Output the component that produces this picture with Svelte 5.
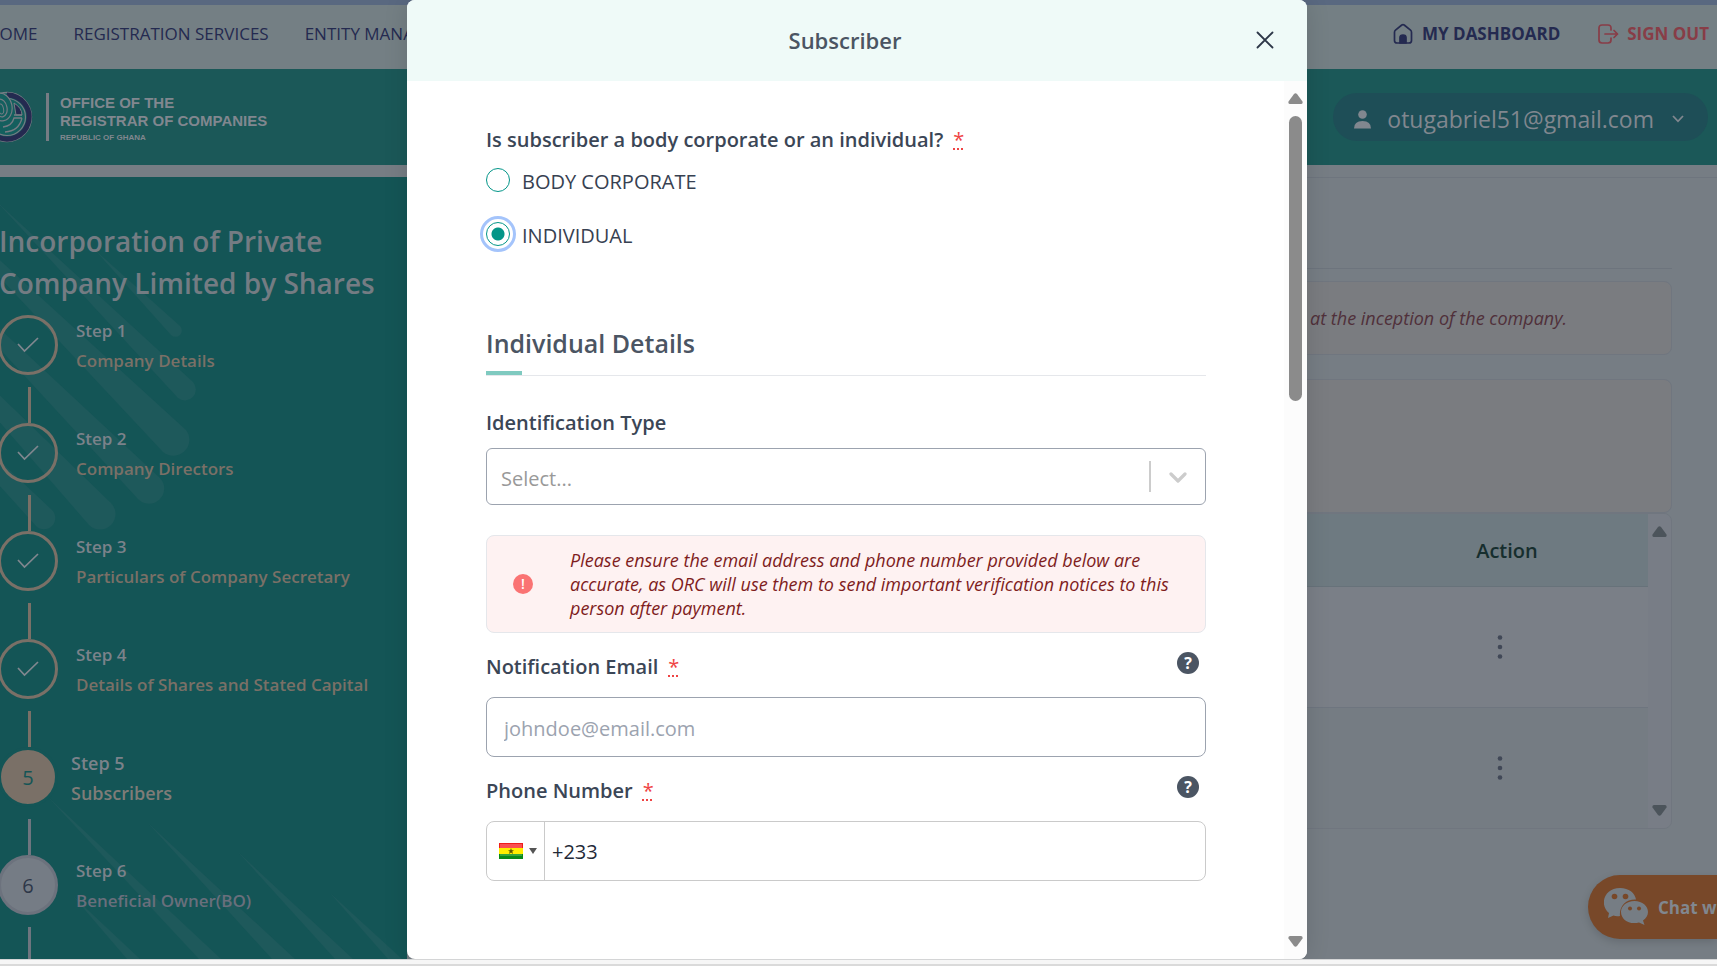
<script>
  const steps = [
    { n: 1, name: 'Company Details', state: 'done' },
    { n: 2, name: 'Company Directors', state: 'done' },
    { n: 3, name: 'Particulars of Company Secretary', state: 'done' },
    { n: 4, name: 'Details of Shares and Stated Capital', state: 'done' },
    { n: 5, name: 'Subscribers', state: 'current' },
    { n: 6, name: 'Beneficial Owner(BO)', state: 'todo' }
  ];
  let kind = $state('individual');
  let idType = $state('');
  let email = $state('');
  let phone = $state('+233');
</script>

<div class="shell">
  <div class="page">
    <nav class="topnav">
      <div class="links">
        <a href="#home">HOME</a>
        <a href="#services">REGISTRATION SERVICES</a>
        <a href="#entity">ENTITY MANAGEMENT</a>
      </div>
      <div class="links account">
        <a href="#dashboard">
          <svg width="20" height="22" viewBox="0 0 20 22" fill="none" stroke="currentColor" stroke-width="1.7" stroke-linejoin="round">
            <path d="M1.5 9.2 Q1.5 8 2.5 7.2 L8.8 2 Q10 1.2 11.2 2 L17.5 7.2 Q18.500 8 18.500 9.200 V17.500 Q18.500 20 16 20 H4 Q1.500 20 1.500 17.500 Z" />
            <path d="M7 20 V14.500 Q7 12 10 12 Q13 12 13 14.500 V20 Z" fill="currentColor" />
          </svg>
          MY DASHBOARD
        </a>
        <a href="#signout" class="signout">
          <svg width="21" height="20" viewBox="0 0 21 20" fill="none" stroke="currentColor" stroke-width="1.700" stroke-linecap="round" stroke-linejoin="round">
            <path d="M13 6 V4 Q13 1 10 1 H4 Q1 1 1 4 V16 Q1 19 4 19 H10 Q13 19 13 16 V14" />
            <path d="M7 10 H19.500 M16 6.500 L19.500 10 L16 13.500" />
          </svg>
          SIGN OUT
        </a>
      </div>
    </nav>

    <header class="brandbar">
      <div class="brand">
        <svg width="58" height="52" viewBox="0 0 58 52" fill="none" aria-hidden="true">
          <circle cx="31" cy="26" r="24.500" fill="#145f5e" stroke="#767c84" stroke-width="1.300" />
          <path d="M31 4 A22 22 0 1 1 20 45" stroke="#242a50" stroke-width="5" />
          <circle cx="31" cy="26" r="18.500" stroke="#767c84" stroke-width="1.200" />
          <path d="M38 12 Q46 17 46 24 H40 Z" fill="#242a50" stroke="#767c84" />
          <path d="M46 27 H38 Q36 35 27 36 M46 27 Q43 40 29 41 M38 24 H46" stroke="#767c84" stroke-width="1.300" />
          <ellipse cx="25" cy="16" rx="11" ry="14" fill="#145f5e" stroke="#767c84" stroke-width="1.200" transform="rotate(-12 25 16)" />
          <ellipse cx="25" cy="17" rx="6" ry="9" stroke="#767c84" stroke-width="1.200" transform="rotate(-12 25 17)" />
          <ellipse cx="25" cy="18" rx="2.500" ry="5" stroke="#767c84" stroke-width="1" transform="rotate(-12 25 18)" />
        </svg>
        <div class="brandtext">
          <strong>OFFICE OF THE<br />REGISTRAR OF COMPANIES</strong>
          <small>REPUBLIC OF GHANA</small>
        </div>
      </div>
      <button class="user">
        <svg width="17" height="19" viewBox="0 0 17 19" fill="currentColor"><circle cx="8.500" cy="4.500" r="4.300" /><path d="M0 18.500 Q0 11 8.500 11 Q17 11 17 18.500 Z" /></svg>
        <span>otugabriel51@gmail.com</span>
        <svg class="caret" width="12" height="8" viewBox="0 0 12 8" fill="none" stroke="currentColor" stroke-width="1.800"><path d="M1 1 L6 6.300 L11 1" /></svg>
      </button>
    </header>

    <div class="columns">
      <aside class="sidebar">
        <svg class="streaks" width="407" height="782" viewBox="0 177 407 782" fill="#1e595b" aria-hidden="true">
          <path d="M95 250 L180 326 A6 6 0 0 1 171 335 Z" />
          <path d="M-2 203 L193 382 A11 11 0 0 1 178 398 Z" />
          <path d="M-110 160 L186 430 A16 16 0 0 1 163 452 Z" />
          <path d="M-130 208 L160 478 A15 15 0 0 1 138 499 Z" />
          <path d="M-150 250 L111 503 A15 15 0 0 1 89 525 Z" />
          <path d="M-150 320 L52 510 A11 11 0 0 1 36 526 Z" />
          <path d="M48 797 L221 959 H199 Z" />
          <path d="M148 823 L295 959 H272 Z" />
          <path d="M238 852 L353 959 H335 Z" />
          <path d="M330 893 L402 959 H388 Z" />
          <path d="M73 896 L140 959 H127 Z" />
        </svg>
        <h1>Incorporation of Private Company Limited by Shares</h1>
        <ol>
          {#each steps as s}
            <li class={s.state}>
              <div class="rail">
                <span class="dot">
                  {#if s.state === 'done'}
                    <svg width="22" height="16" viewBox="0 0 22 16" fill="none" stroke="#81878f" stroke-width="1.700"><path d="M1 7 L7.500 14 L21 1" /></svg>
                  {:else}{s.n}{/if}
                </span>
                <span class="line"></span>
              </div>
              <div class="steptext"><span>Step {s.n}</span><em>{s.name}</em></div>
            </li>
          {/each}
        </ol>
      </aside>

      <main>
        <div class="pagehead"></div>
        <div class="note first">at the inception of the company.</div>
        <div class="note second"></div>
        <div class="tablebox">
          <table>
            <thead><tr><th></th><th class="action">Action</th></tr></thead>
            <tbody>
              {#each [1, 2] as row}
                <tr>
                  <td></td>
                  <td class="action">
                    <button class="more" aria-label="Row actions">
                      <svg width="6" height="24" viewBox="0 0 6 24" fill="#414857"><circle cx="3" cy="2.500" r="2.300" /><circle cx="3" cy="12" r="2.300" /><circle cx="3" cy="21.500" r="2.300" /></svg>
                    </button>
                  </td>
                </tr>
              {/each}
            </tbody>
          </table>
          <div class="bar">
            <svg width="15" height="11" viewBox="0 0 15 11" fill="#4c545b"><path d="M6 1 Q7.500 -0.500 9 1 L14.500 8.500 Q15 11 13 11 H2 Q0 11 0.500 8.500 Z" /></svg>
            <svg width="15" height="11" viewBox="0 0 15 11" fill="#4c545b"><path d="M6 10 Q7.500 11.500 9 10 L14.500 2.500 Q15 0 13 0 H2 Q0 0 0.500 2.500 Z" /></svg>
          </div>
        </div>
      </main>
    </div>

    <button class="chat">
      <svg width="45" height="38" viewBox="0 0 45 38" aria-hidden="true">
        <path fill="#767d84" d="M16 0 C25 0 31 5 32 11.500 C22 11 15 18 16 28 C13 28.500 11 28 9.500 27.500 L4 30 L5 25 C-5 17 0 0 16 0 Z" />
        <path fill="#767d84" d="M30.500 13 C38.500 13 44 18 44 24 C44 27.500 42 30.500 39 32.500 L40.500 37 L35 34.500 C25 37 17 31.500 17 24 C17 18 22.500 13 30.500 13 Z" />
        <g fill="#784829"><circle cx="10.500" cy="8.500" r="2.800" /><circle cx="21.500" cy="8.500" r="2.800" /><circle cx="26" cy="20.500" r="2" /><circle cx="35" cy="20.500" r="2" /></g>
      </svg>
      <span>Chat with us</span>
    </button>

    <div class="layer">
      <div class="modal" role="dialog" aria-modal="true" aria-labelledby="modal-title">
        <div class="modalhead">
          <h2 id="modal-title">Subscriber</h2>
          <button class="close" aria-label="Close">
            <svg width="18" height="18" viewBox="0 0 18 18" fill="none" stroke="#2d3748" stroke-width="1.800" stroke-linecap="round"><path d="M1.500 1.500 L16.500 16.500 M16.500 1.500 L1.500 16.500" /></svg>
          </button>
        </div>
        <div class="modalbody">
          <form>
            <fieldset>
              <legend>Is subscriber a body corporate or an individual?<abbr title="required">*</abbr></legend>
              <label class="choice"><input type="radio" name="kind" value="corporate" bind:group={kind} /><span>BODY CORPORATE</span></label>
              <label class="choice"><input type="radio" name="kind" value="individual" bind:group={kind} /><span>INDIVIDUAL</span></label>
            </fieldset>

            <h3>Individual Details</h3>

            <div class="labelrow idrow"><label for="idtype">Identification Type</label></div>
            <div class="selectbox">
              <select id="idtype" bind:value={idType}><option value="">Select...</option></select>
              <span class="sep"></span>
              <svg width="18" height="12" viewBox="0 0 18 12" fill="none" stroke="#cccccc" stroke-width="3.200" stroke-linecap="round" stroke-linejoin="round"><path d="M2 3 L9 10 L16 3" /></svg>
            </div>

            <div class="alert">
              <span class="bang">!</span>
              <p>Please ensure the email address and phone number provided below are accurate, as ORC will use them to send important verification notices to this person after payment.</p>
            </div>

            <div class="labelrow">
              <label for="email">Notification Email<abbr title="required">*</abbr></label>
              <button type="button" class="help" aria-label="Help with email">?</button>
            </div>
            <input class="text" id="email" type="email" placeholder="johndoe@email.com" bind:value={email} />

            <div class="labelrow">
              <label for="phone">Phone Number<abbr title="required">*</abbr></label>
              <button type="button" class="help" aria-label="Help with phone number">?</button>
            </div>
            <div class="phone">
              <button type="button" class="country" aria-label="Country">
                <svg width="24" height="16" viewBox="0 0 24 16">
                  <rect width="24" height="16" fill="#ee1c1c" /><rect y="1" x="1" width="22" height="4" fill="#fa5050" />
                  <rect y="5" width="24" height="6" fill="#ffee00" /><rect y="11" width="24" height="5" fill="#088a18" /><rect y="11" x="1" width="22" height="2" fill="#35a53c" />
                  <path d="M12 5 L12.800 7.200 H15 L13.300 8.600 L14 11 L12 9.600 L10 11 L10.700 8.600 L9 7.200 H11.200 Z" fill="#5c5600" />
                </svg>
                <svg width="8" height="6" viewBox="0 0 8 6" fill="#555"><path d="M0 0 H8 L4 6 Z" /></svg>
              </button>
              <input id="phone" type="tel" bind:value={phone} />
            </div>
          </form>
          <div class="scroll">
            <svg width="15" height="11" viewBox="0 0 15 11" fill="#8b8b8b"><path d="M6 1 Q7.500 -0.500 9 1 L14.500 8.500 Q15 11 13 11 H2 Q0 11 0.500 8.500 Z" /></svg>
            <span class="thumb"></span>
            <svg class="down" width="15" height="11" viewBox="0 0 15 11" fill="#8b8b8b"><path d="M6 10 Q7.500 11.500 9 10 L14.500 2.500 Q15 0 13 0 H2 Q0 0 0.500 2.500 Z" /></svg>
          </div>
        </div>
      </div>
    </div>
  </div>
  <div class="frame"></div>
</div>

<style>
  :global(body) { margin: 0; }
  .shell, .shell * { box-sizing: border-box; }
  .shell {
    height: 100vh;
    display: flex;
    flex-direction: column;
    overflow: hidden;
    font-family: "Open Sans", "Noto Sans", sans-serif;
    font-size: 20px;
  }
  button, input, select { font: inherit; color: inherit; }
  button { border: 0; background: none; padding: 0; cursor: pointer; }
  svg { flex: none; display: block; }
  h1, h2, h3, ol, p { margin: 0; padding: 0; }

  .page {
    position: relative;
    flex: 1;
    min-height: 0;
    display: flex;
    flex-direction: column;
    overflow: hidden;
    background: #767d84;
  }
  .frame {
    height: 7px;
    flex: none;
    background: #f6f6f6;
    border-top: 1px solid #d4d5d6;
    border-bottom: 2px solid #dadada;
  }

  .topnav {
    flex: none;
    height: 69px;
    border-top: 5px solid #596880;
    background: #747f84;
    display: flex;
    justify-content: space-between;
    padding-right: 8px;
  }
  .links {
    display: flex;
    align-items: center;
    gap: 36px;
    margin-left: -13px;
    font-size: 17px;
    font-weight: 500;
    white-space: nowrap;
    line-height: 24px;
    padding-bottom: 6px;
  }
  .links a { color: #242a50; text-decoration: none; display: flex; align-items: center; gap: 9px; }
  .links.account { font-weight: 700; gap: 38px; }
  .links a.signout { color: #883d47; gap: 8px; }

  .brandbar {
    flex: none;
    height: 96px;
    background: #1b5858;
    display: flex;
    align-items: center;
    justify-content: space-between;
    padding-right: 9px;
  }
  .brand { display: flex; align-items: center; margin-left: -24px; color: #81878f; font-family: "Liberation Sans", sans-serif; }
  .brandtext {
    margin-left: 12px;
    height: 48px;
    padding: 1px 0 0 11px;
    border-left: 3px solid #767c84;
    white-space: nowrap;
  }
  .brandtext strong { display: block; font-size: 15px; line-height: 18px; }
  .brandtext small { display: block; font-size: 8px; line-height: 12px; font-weight: 700; margin-top: 2px; }
  .user {
    height: 48px;
    border-radius: 24px;
    background: #1e4e57;
    color: #81878f;
    display: flex;
    align-items: center;
    padding: 4px 24px 0 21px;
    font-size: 23px;
    line-height: 32px;
  }
  .user span { margin: 0 18px 0 16px; }

  .columns { flex: 1; min-height: 0; display: flex; padding-top: 12px; }
  .sidebar { width: 407px; flex: none; position: relative; background: #145556; overflow: hidden; }
  .streaks { position: absolute; left: 0; top: 0; }
  h1 {
    position: relative;
    margin: 43px 0 0 -1px;
    font-size: 28px;
    font-weight: 600;
    line-height: 42px;
    color: #747c83;
    width: 390px;
  }
  ol { position: relative; list-style: none; margin: 11px 0 0 -2px; }
  li { display: flex; height: 108px; }
  .rail { width: 60px; flex: none; }
  .dot {
    width: 60px;
    height: 60px;
    border-radius: 50%;
    border: 3px solid #7a7067;
    display: flex;
    align-items: center;
    justify-content: center;
  }
  .line { display: block; width: 3px; height: 36px; margin: 12px 0 0 30px; background: #7a7067; }
  .steptext { padding: 1px 0 0 18px; font-size: 17px; font-weight: 600; line-height: 30px; white-space: nowrap; color: #7b828a; }
  .steptext span, .steptext em { display: block; font-style: normal; }
  .steptext em { color: #7a7067; }
  .current .dot { background: #7a7067; color: #145556; border-color: #145556; }
  .current .line, .todo .line { background: #6e757f; }
  .current .steptext { padding-left: 13px; font-size: 18px; }
  .current em { color: #7f7c78; }
  .todo .dot { background: #757c85; border-color: #6c727d; color: #2d3748; }
  .todo em { color: #696f7c; }

  main { flex: 1; min-width: 0; padding-right: 45px; border-top: 1px solid #6e757e; }
  .pagehead { height: 91px; border-bottom: 1px solid #6d747d; margin-bottom: 12px; }
  .note { background: #7a7c80; border: 1px solid #70767f; border-radius: 8px; }
  .first {
    height: 74px;
    display: flex;
    align-items: center;
    justify-content: flex-end;
    padding-right: 104px;
    margin-bottom: 24px;
    font-size: 18px;
    font-style: italic;
    color: #50303a;
  }
  .second { height: 134px; }
  .tablebox { display: flex; border: 1px solid #70767f; border-radius: 8px; overflow: hidden; }
  table { flex: 1; border-collapse: collapse; table-layout: fixed; }
  th { height: 72px; padding: 2px 0 0; background: #6e7a81; border-bottom: 1px solid #67727a; font-weight: 600; color: #162e2e; }
  td { height: 121px; padding: 0; background: #7a7f87; text-align: center; }
  tr:first-child td { border-bottom: 1px solid #6e757f; }
  tr:last-child td { background: #757c83; }
  .action { width: 296px; }
  th.action { padding-left: 14px; }
  .more { display: inline-flex; padding: 8px; }
  .bar { width: 23px; display: flex; flex-direction: column; align-items: center; justify-content: space-between; padding: 12px 0; background: #787d86; }

  .chat {
    position: absolute;
    right: 0;
    bottom: 20px;
    width: 129px;
    height: 64px;
    padding-left: 16px;
    border-radius: 32px 0 0 32px;
    background: #784829;
    color: #81878f;
    display: flex;
    align-items: center;
    gap: 9px;
    overflow: hidden;
    white-space: nowrap;
    font-size: 17px;
    font-weight: 700;
    box-shadow: 0 3px 8px rgba(0, 0, 0, 0.15);
  }

  .layer { position: absolute; inset: 0; display: flex; justify-content: center; padding-right: 3px; }
  .modal {
    width: 900px;
    max-width: 100%;
    display: flex;
    flex-direction: column;
    background: #fff;
    border-radius: 8px;
    overflow: hidden;
    box-shadow: 0 0 24px rgba(0, 0, 0, 0.12);
  }
  .modalhead { flex: none; height: 81px; padding: 0 30px 2px; display: flex; align-items: center; background: #effaf8; }
  h2 { flex: 1; text-align: center; font-size: 22px; line-height: 32px; font-weight: 600; color: #4b5563; }
  .close { width: 24px; height: 24px; display: flex; align-items: center; justify-content: center; }
  .modalbody { flex: 1; min-height: 0; display: flex; overflow: hidden; }
  form { flex: 1; min-width: 0; padding: 44px 78px 0 79px; color: #374151; }
  fieldset { border: 0; margin: 0; padding: 0; }
  legend, .labelrow { padding: 0; line-height: 30px; font-weight: 600; color: #3b4656; }
  abbr { color: #ef4444; font-weight: 400; margin-left: 10px; text-decoration: underline dotted; }
  .choice { display: flex; align-items: center; gap: 12px; height: 24px; margin-top: 13px; line-height: 24px; }
  .choice span { padding-top: 3px; }
  .choice + .choice { margin-top: 30px; }
  .choice input {
    appearance: none;
    width: 24px;
    height: 24px;
    margin: 0;
    border: 1px solid #039588;
    border-radius: 50%;
    background: #fff;
  }
  .choice input:checked {
    background: radial-gradient(circle, #039588 6px, #fff 7px);
    outline: 3px solid #a4c4fb;
    outline-offset: 3px;
  }
  h3 {
    position: relative;
    margin-top: 79px;
    padding-bottom: 14px;
    border-bottom: 1px solid #e5e7eb;
    font-size: 25px;
    line-height: 36px;
    font-weight: 600;
    color: #4b5563;
  }
  h3::after { content: ""; position: absolute; left: 0; bottom: 0; width: 36px; height: 4px; background: #7fcac0; }
  .labelrow { display: flex; justify-content: space-between; align-items: flex-start; margin: 19px 0 15px; }
  .idrow { margin: 32px 0 10px; }
  .help {
    width: 22px;
    height: 22px;
    margin-right: 7px;
    border-radius: 50%;
    background: #4b5563;
    color: #fff;
    font-size: 16px;
    font-weight: 700;
    line-height: 22px;
    text-align: center;
  }
  .selectbox { height: 57px; display: flex; align-items: center; border: 1px solid #9ca3af; border-radius: 6px; padding-right: 18px; }
  .selectbox select { flex: 1; align-self: stretch; appearance: none; border: 0; background: none; padding: 4px 0 0 14px; color: #999; outline: 0; }
  .sep { width: 2px; height: 31px; margin-right: 18px; background: #ccc; }
  .alert {
    margin-top: 30px;
    padding: 12px 30px 12px 26px;
    display: flex;
    align-items: center;
    gap: 37px;
    background: #fef2f2;
    border: 1px solid #e5e7eb;
    border-radius: 8px;
    color: #7f1d1d;
  }
  .alert p { font-size: 18px; line-height: 24px; font-style: italic; }
  .bang { flex: none; width: 20px; height: 20px; border-radius: 50%; background: #fa7373; color: #fff; font-size: 14px; line-height: 20px; font-weight: 600; text-align: center; }
  .text { display: block; width: 100%; height: 60px; border: 1px solid #9ca3af; border-radius: 8px; padding: 3px 17px 0; background: #fff; outline: 0; }
  .text::placeholder { color: #9ca3af; opacity: 1; }
  .phone { display: flex; height: 60px; border: 1px solid #cacaca; border-radius: 8px; overflow: hidden; }
  .country { width: 58px; flex: none; display: flex; align-items: center; gap: 6px; padding-left: 12px; border-right: 1px solid #cacaca; }
  .phone input { flex: 1; min-width: 0; border: 0; outline: 0; padding: 0 7px; color: #1f2937; background: none; }
  .scroll { width: 23px; flex: none; display: flex; flex-direction: column; align-items: center; padding: 12px 0; background: #fcfcfc; }
  .thumb { width: 13px; height: 285px; margin-top: 12px; border-radius: 7px; background: #8b8b8b; }
  .down { margin-top: auto; }
</style>
